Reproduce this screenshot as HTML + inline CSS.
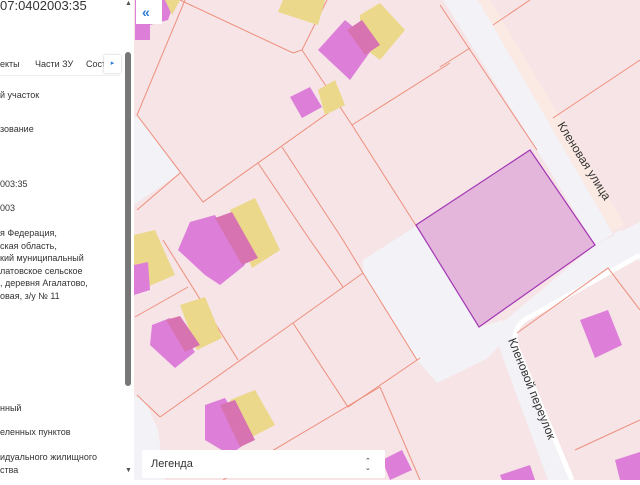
<!DOCTYPE html>
<html><head><meta charset="utf-8"><style>
html,body{margin:0;padding:0;width:640px;height:480px;overflow:hidden;background:#fff;font-family:"Liberation Sans",sans-serif;}
#panel{position:absolute;left:0;top:0;width:134px;height:480px;background:#fff;overflow:hidden;color:#333;font-size:9px;}
#panel .t{position:absolute;white-space:nowrap;}
#map{position:absolute;left:134px;top:0;}
</style></head><body>
<div id="map">
<svg width="506" height="480" viewBox="134 0 506 480" xmlns="http://www.w3.org/2000/svg">
<rect x="134" y="0" width="506" height="480" fill="#f6e4e6"/>
<!-- gray open areas -->
<polygon points="134,118 137,115 180,173 134,205" fill="#f2f2f7"/>
<polygon points="363,260 416,226 479,327 503,320 500,345 488,358 437,383 417,360 363,273" fill="#f2f2f7"/>
<polygon points="134,395 145,400 158,430 165,480 134,480" fill="#f2f2f7"/>
<!-- main road -->
<polygon points="443,0 478,0 612,232 640,262 640,240 620,230 595,245 537,150" fill="#f2f2f7"/>
<polygon points="478,0 490,0 625,225 612,232" fill="#fbe9e4"/>
<!-- lane -->
<path d="M595,245 L640,222 L640,255 L528,318 Q510,328 517,348 L572,480 L548,480 L500,350 Q494,326 508,318 Z" fill="#f2f2f7"/>
<path d="M640,255 L528,318 Q510,328 517,348 L572,480" fill="none" stroke="#fff" stroke-width="5"/>
<!-- parcel lines -->
<g fill="none" stroke="#ee8f7c" stroke-width="1">
<path d="M185,0 L137,115 L203,202 L338,106"/>
<path d="M180,0 L293,53 L302,50 L327,0"/>
<path d="M302,50 L352,125 L417,227"/>
<path d="M352,125 L450,63"/>
<path d="M440,67 L470,48"/>
<path d="M493,25 L530,0"/>
<path d="M553,118 L640,60"/>
<path d="M440,5 L537,150"/>
<path d="M137,210 L180,173"/>
<path d="M258,163 L310,240 L343,287"/>
<path d="M282,147 L343,240 L363,273"/>
<path d="M135,317 L188,287"/>
<path d="M163,240 L238,360"/>
<path d="M160,417 L293,323 L363,273"/>
<path d="M293,323 L348,407 L420,358"/>
<path d="M380,387 L420,480"/>
<path d="M223,480 L380,387"/>
<path d="M363,273 L417,360"/>
<path d="M135,270 L165,255"/>
<path d="M517,333 L608,268 L640,310"/>
<path d="M575,450 L640,420"/>
<path d="M137,395 L160,417"/>
</g>
<!-- buildings -->
<g>
<polygon points="135,0 175,0 168,20 150,25 150,40 135,40" fill="#dd7fd9"/>
<polygon points="165,0 180,0 172,15" fill="#ecd88a"/>
<polygon points="283,0 325,0 318,25 278,12" fill="#ecd88a"/>
<polygon points="360,15 380,3 405,30 380,60 360,45" fill="#ecd88a"/>
<polygon points="318,50 345,20 375,45 350,80" fill="#dd7fd9"/>
<polygon points="347,30 362,20 380,45 365,55" fill="#d873b2"/>
<polygon points="318,90 335,80 345,105 325,115" fill="#ecd88a"/>
<polygon points="290,97 310,87 322,107 302,118" fill="#dd7fd9"/>
<polygon points="134,235 155,230 175,275 140,290 134,285" fill="#ecd88a"/>
<polygon points="134,265 148,262 150,290 134,295" fill="#dd7fd9"/>
<polygon points="230,210 255,198 280,250 252,268" fill="#ecd88a"/>
<polygon points="190,222 215,215 245,265 220,285 205,275 178,250" fill="#dd7fd9"/>
<polygon points="215,218 232,212 258,258 242,265" fill="#d873b2"/>
<polygon points="180,305 205,297 222,338 197,350" fill="#ecd88a"/>
<polygon points="152,325 170,318 195,352 175,368 150,345" fill="#dd7fd9"/>
<polygon points="166,320 180,316 200,345 185,352" fill="#d873b2"/>
<polygon points="230,400 255,390 275,425 250,438" fill="#ecd88a"/>
<polygon points="205,405 225,398 250,440 230,455 205,440" fill="#dd7fd9"/>
<polygon points="220,405 235,400 255,440 240,447" fill="#d873b2"/>
<polygon points="580,320 608,310 622,345 595,358" fill="#dd7fd9"/>
<polygon points="382,460 402,450 412,470 390,480" fill="#dd7fd9"/>
<polygon points="500,475 530,465 535,480 502,480" fill="#dd7fd9"/>
<polygon points="615,460 640,452 640,480 620,480" fill="#dd7fd9"/>
</g>
<!-- selected -->
<polygon points="416,225 530,150 595,245 479,327" fill="#e4b6dc" stroke="#a338b4" stroke-width="1.2"/>
<text x="0" y="0" font-size="12" fill="#333" font-family="Liberation Sans" transform="translate(557,125) rotate(58)">Кленовая  улица</text>
<text x="0" y="0" font-size="12" fill="#333" font-family="Liberation Sans" transform="translate(508,340) rotate(68)">Кленовой  переулок</text>
<!-- collapse btn -->
<rect x="136" y="0" width="26" height="24" fill="#fff"/>
<text x="142" y="17" font-size="14" fill="#2b7bd6" font-weight="bold">«</text>
<!-- legend -->
<rect x="142" y="450" width="243" height="28" rx="2" fill="#fff"/>
<text x="151" y="467" font-size="11" fill="#333">Легенда</text>
<text x="365" y="463" font-size="7" fill="#333">⌃</text>
<text x="365" y="470" font-size="7" fill="#333">⌄</text>
</svg>
</div>
<div id="panel">
<div class="t" style="left:0;top:-2px;font-size:13px;color:#333">07:0402003:35</div>
<div class="t" style="left:0;top:59px">екты</div>
<div class="t" style="left:35px;top:59px">Части ЗУ</div>
<div class="t" style="left:86px;top:59px">Сост</div>
<div style="position:absolute;left:104px;top:55px;width:17px;height:18px;background:#fff;box-shadow:0 0 2px #bbb;color:#2b7bd6;font-size:7px;text-align:center;line-height:18px">▸</div>
<div style="position:absolute;left:0;top:75px;width:120px;height:1px;background:#eee"></div>
<div class="t" style="left:0;top:90px">й участок</div>
<div class="t" style="left:0;top:124px">зование</div>
<div class="t" style="left:0;top:179px">003:35</div>
<div class="t" style="left:0;top:203px">003</div>
<div class="t" style="left:0;top:227px;line-height:12.5px">я Федерация,<br>ская область,<br>кий муниципальный<br>латовское сельское<br>, деревня Агалатово,<br>овая, з/у № 11</div>
<div class="t" style="left:0;top:403px">нный</div>
<div class="t" style="left:0;top:427px">еленных пунктов</div>
<div class="t" style="left:0;top:451px;line-height:12.5px">идуального жилищного<br>ства</div>
<div style="position:absolute;left:125px;top:52px;width:6px;height:334px;background:#777;border-radius:3px"></div>
<div class="t" style="left:125px;top:0;font-size:7px;color:#555">▲</div>
<div class="t" style="left:125px;top:467px;font-size:7px;color:#555">▼</div>
</div>
</body></html>
